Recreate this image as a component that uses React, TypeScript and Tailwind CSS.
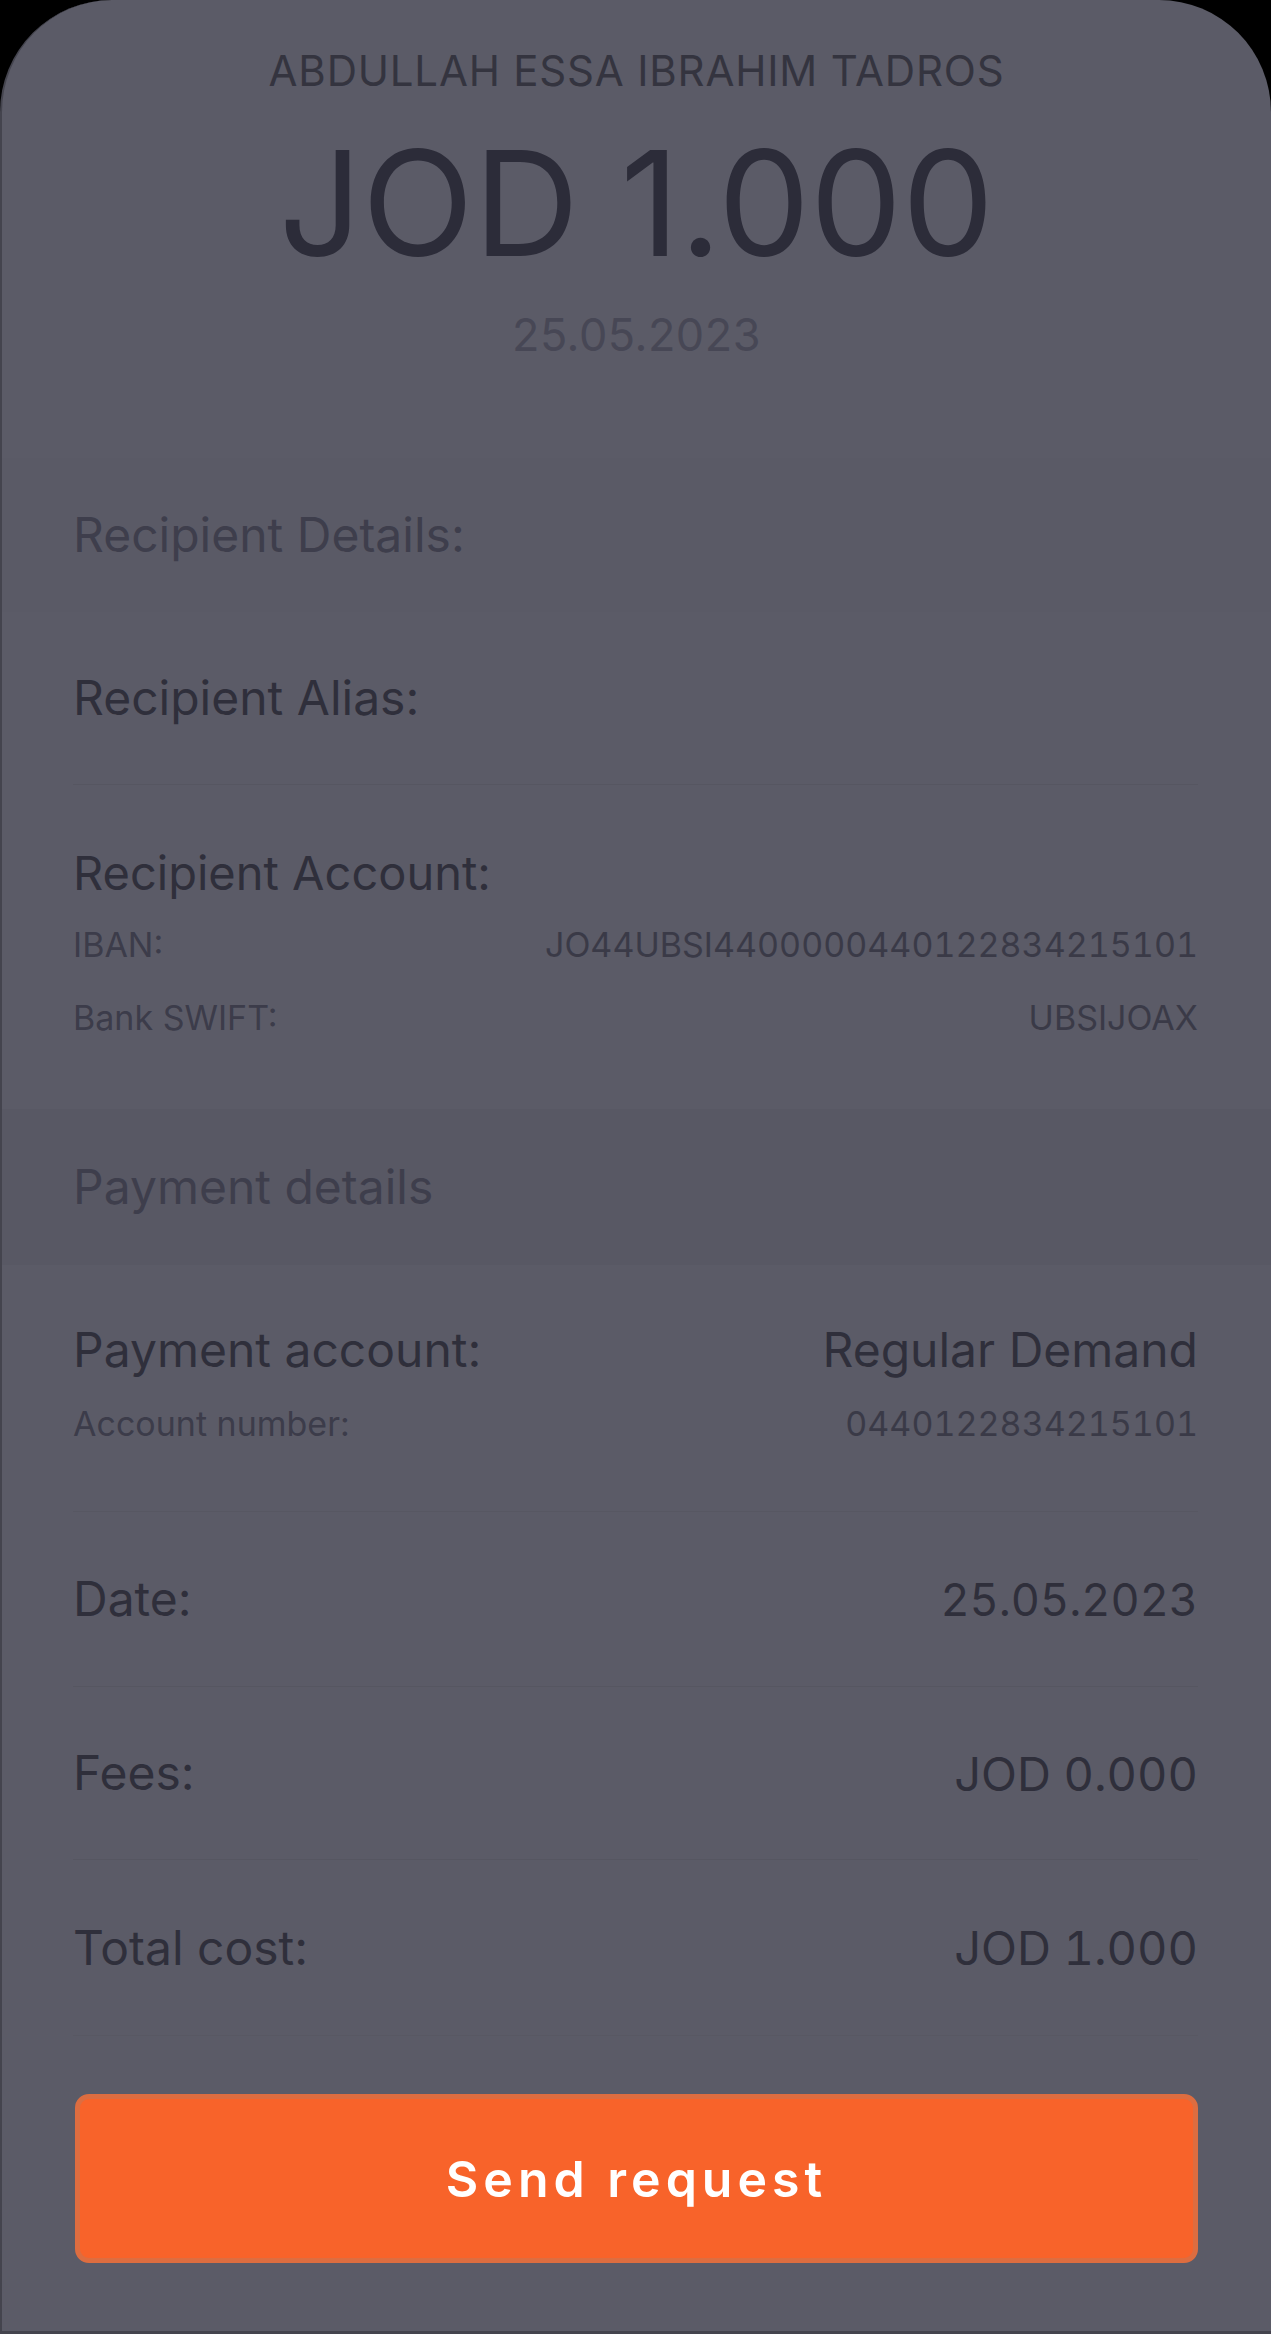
import React from 'react';

const font = "font-['Inter','Noto_Sans',sans-serif]";

function Row({
  label,
  value,
  valueClass = 'text-[47px]',
  className = '',
}: {
  label: string;
  value?: string;
  valueClass?: string;
  className?: string;
}) {
  return (
    <div className={`ml-[71px] mr-[73px] flex items-center justify-between border-b border-[#565661] ${className}`}>
      <span className="text-[48px] leading-none text-[#2f2f3b]">{label}</span>
      {value && <span className={`${valueClass} leading-none text-[#2f2f3b] tabular-nums`}>{value}</span>}
    </div>
  );
}

function SubRow({ label, value, className = '' }: { label: string; value: string; className?: string }) {
  return (
    <div className={`flex h-[34px] items-center justify-between ${className}`}>
      <span className="text-[34px] leading-none text-[#3c3c4a]">{label}</span>
      <span className="text-[34px] leading-none text-[#3a3a47] tabular-nums">{value}</span>
    </div>
  );
}

function Band({ title, className = '' }: { title: string; className?: string }) {
  return (
    <div className={`flex items-center pl-[71px] ${className}`}>
      <span className="text-[48px] leading-none text-[#3e3e4c]">{title}</span>
    </div>
  );
}

export default function App() {
  return (
    <div className={`h-[2334px] w-full bg-black ${font}`}>
      <div className="flex h-[2334px] flex-col overflow-hidden rounded-t-[112px] border-b-[3px] border-l-2 border-[#44444e] bg-[#5b5b67]">
        {/* header */}
        <div className="flex h-[458px] shrink-0 flex-col items-center pt-[50px]">
          <div className="text-[42px] leading-none tracking-[0.8px] text-[#34343f] uppercase">
            Abdullah Essa Ibrahim Tadros
          </div>
          <div className="mt-[38px] text-[146px] leading-none text-[#2c2c39]">JOD 1.000</div>
          <div className="mt-[36px] text-[45px] leading-none tracking-[0.5px] text-[#474755]">25.05.2023</div>
        </div>

        <Band title="Recipient Details:" className="h-[154px] shrink-0 bg-[#5a5a66]" />
        <Row label="Recipient Alias:" className="h-[173px] shrink-0" />

        <div className="ml-[71px] mr-[73px] h-[324px] shrink-0 pt-[63px]">
          <div className="flex h-[48px] items-center">
            <span className="text-[47px] leading-none text-[#2f2f3b]">Recipient Account:</span>
          </div>
          <SubRow label="IBAN:" value="JO44UBSI4400000440122834215101" className="mt-[32px]" />
          <SubRow label="Bank SWIFT:" value="UBSIJOAX" className="mt-[39px]" />
        </div>

        <Band title="Payment details" className="h-[156px] shrink-0 bg-[#585864]" />

        <div className="ml-[71px] mr-[73px] h-[247px] shrink-0 border-b border-[#575762] pt-[61px]">
          <div className="flex h-[48px] items-center justify-between">
            <span className="text-[48px] leading-none text-[#2f2f3b]">Payment account:</span>
            <span className="text-[48px] leading-none text-[#2f2f3b]">Regular Demand</span>
          </div>
          <SubRow label="Account number:" value="0440122834215101" className="mt-[33px]" />
        </div>

        <Row label="Date:" value="25.05.2023" valueClass="text-[45px]" className="h-[175px] shrink-0" />
        <Row label="Fees:" value="JOD 0.000" className="h-[173px] shrink-0" />
        <Row label="Total cost:" value="JOD 1.000" className="h-[176px] shrink-0 border-[#585863]" />

        <div className="mx-[73px] mt-[58px] shrink-0">
          <button className="flex h-[169px] w-full items-center justify-center rounded-[14px] border-[5px] border-[#dd6d40] bg-[#f8632a]">
            <span className="text-[50px] font-semibold leading-none tracking-[5px] text-white">Send request</span>
          </button>
        </div>
      </div>
    </div>
  );
}
